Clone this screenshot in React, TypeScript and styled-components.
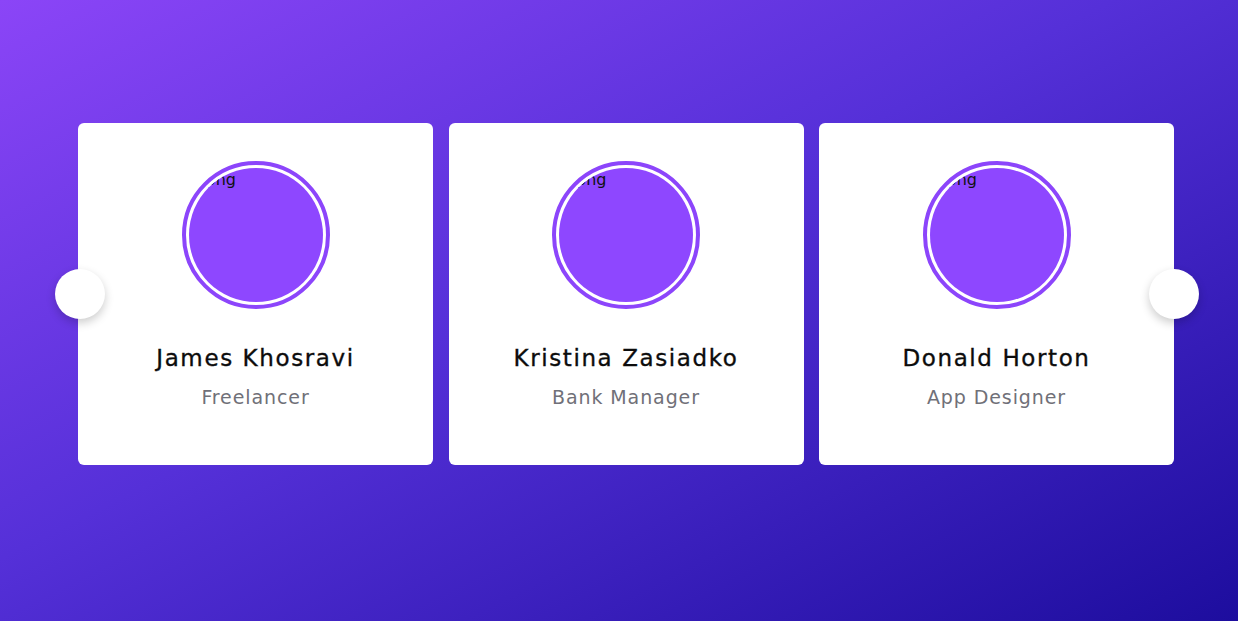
import React from "react";
import styled, { createGlobalStyle } from "styled-components";

const Global = createGlobalStyle`
  html, body { margin: 0; padding: 0; }
  body {
    font-family: "DejaVu Sans", "Open Sans", sans-serif;
    min-height: 621px;
    background: linear-gradient(to bottom right, #8b45f7 0%, #5530d8 45%, #1d0d9e 100%);
    overflow: hidden;
  }
`;

const Page = styled.main`
  width: 1238px;
  height: 621px;
  box-sizing: border-box;
  padding: 123px 64px 0 78px;
`;

const Slider = styled.div`
  position: relative;
  width: 1096px;
`;

const Track = styled.div`
  display: grid;
  grid-template-columns: repeat(3, 355px);
  column-gap: 15.5px;
`;

const Card = styled.article`
  height: 342px;
  background: #fff;
  border-radius: 6px;
  display: flex;
  flex-direction: column;
  align-items: center;
  padding-top: 38px;
  box-sizing: border-box;
`;

const Avatar = styled.div`
  width: 148px;
  height: 148px;
  box-sizing: border-box;
  border-radius: 50%;
  border: 4px solid #8c45fb;
  padding: 3px;
  background: #fff;
`;

const AvatarFill = styled.div`
  width: 100%;
  height: 100%;
  border-radius: 50%;
  background: #8e47ff;
  position: relative;
  overflow: hidden;
`;

const Alt = styled.span`
  position: absolute;
  left: 17px;
  top: 4px;
  font-family: "DejaVu Sans", sans-serif;
  font-size: 16px;
  line-height: 16px;
  color: #111;
`;

const Name = styled.h2`
  margin: 34px 0 0;
  font-size: 23px;
  font-weight: 400;
  letter-spacing: 1.6px;
  -webkit-text-stroke: 0.35px #0c0c0c;
  color: #0c0c0c;
  line-height: 30px;
`;

const Role = styled.p`
  margin: 12px 0 0;
  font-size: 19px;
  font-weight: 400;
  letter-spacing: 0.9px;
  color: #707078;
  line-height: 24px;
`;

const Arrow = styled.button<{ $side: "left" | "right" }>`
  position: absolute;
  top: 146px;
  ${(p) => (p.$side === "left" ? "left: -23px;" : "right: -25px;")}
  width: 50px;
  height: 50px;
  border-radius: 50%;
  border: none;
  background: #fff;
  box-shadow: 0 4px 10px rgba(0, 0, 0, 0.2);
  padding: 0;
`;

const people = [
  { name: "James Khosravi", role: "Freelancer" },
  { name: "Kristina Zasiadko", role: "Bank Manager" },
  { name: "Donald Horton", role: "App Designer" },
];

export default function App() {
  return (
    <>
      <Global />
      <Page>
        <Slider>
          <Track>
            {people.map((p) => (
              <Card key={p.name}>
                <Avatar>
                  <AvatarFill>
                    <Alt>png</Alt>
                  </AvatarFill>
                </Avatar>
                <Name>{p.name}</Name>
                <Role>{p.role}</Role>
              </Card>
            ))}
          </Track>
          <Arrow $side="left" aria-label="Previous" />
          <Arrow $side="right" aria-label="Next" />
        </Slider>
      </Page>
    </>
  );
}
